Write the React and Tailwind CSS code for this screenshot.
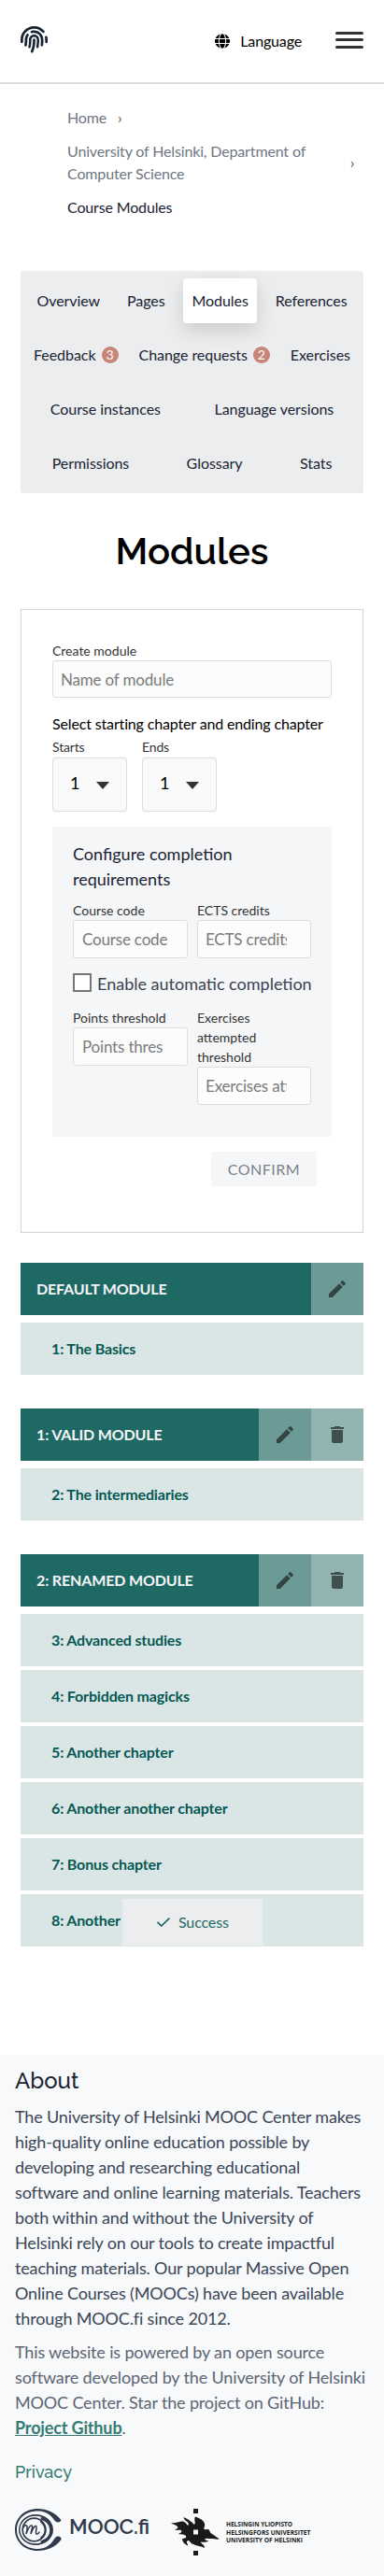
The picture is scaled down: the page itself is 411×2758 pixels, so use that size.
import React from "react";
import { FaFingerprint } from "react-icons/fa6";
import { MdEdit, MdDelete } from "react-icons/md";

function Globe() {
  return (
    <svg className="size-4" viewBox="0 0 496 512" preserveAspectRatio="none" fill="#000">
      <path d="M336.500 160C322 70.700 287.800 8 248 8s-74 62.700-88.500 152h177zM152 256c0 22.200 1.200 43.500 3.300 64h185.300c2.100-20.500 3.300-41.800 3.300-64s-1.200-43.500-3.300-64H155.300c-2.100 20.500-3.300 41.800-3.300 64zm324.700-96c-28.600-67.900-86.500-120.400-158-141.600 24.400 33.800 41.200 84.700 50 141.600h108zM177.200 18.400C105.800 39.600 47.800 92.100 19.300 160h108c8.700-56.900 25.500-107.800 49.900-141.600zM487.400 192H372.700c2.100 21 3.300 42.500 3.300 64s-1.200 43-3.300 64h114.600c5.500-20.500 8.600-41.800 8.600-64s-3.100-43.500-8.500-64zM120 256c0-21.500 1.200-43 3.300-64H8.600C3.200 212.500 0 233.800 0 256s3.200 43.500 8.600 64h114.600c-2-21-3.200-42.500-3.200-64zm39.500 96c14.500 89.300 48.700 152 88.500 152s74-62.700 88.500-152h-177zm159.300 141.600c71.400-21.200 129.400-73.700 158-141.600h-108c-8.800 56.900-25.600 107.800-50 141.600zM19.300 352c28.600 67.900 86.500 120.400 158 141.600-24.400-33.800-41.200-84.700-50-141.600h-108z" />
    </svg>
  );
}

function Header() {
  return (
    <header className="flex h-[90px] items-start border-b-2 border-[#dcdcdc] px-[22px]">
      <FaFingerprint className="mt-7 size-[29px] text-[#1a2333]" />
      <div className="mt-8 ml-auto flex h-6 items-center gap-[11px]">
        <Globe />
        <span className="text-base text-black">Language</span>
      </div>
      <div className="mt-[34px] ml-[36px] flex w-[30px] flex-col">
        <span className="h-[3px] rounded-sm bg-[#333]" />
        <span className="mt-1 h-[3px] rounded-sm bg-[#333]" />
        <span className="mt-[5px] h-[3px] rounded-sm bg-[#333]" />
      </div>
    </header>
  );
}

function Crumbs() {
  return (
    <nav className="flex h-[200px] flex-col gap-3 pt-6 pr-[32px] pl-[72px] text-base leading-6 text-[#707684]">
      <div className="flex items-center">
        <span>Home</span>
        <span className="ml-3 text-[#4c5361]">›</span>
      </div>
      <div className="flex items-center justify-between">
        <span className="w-[270px]">University of Helsinki, Department of Computer Science</span>
        <span className="text-[#4c5361]">›</span>
      </div>
      <div className="text-[#1a2333]">Course Modules</div>
    </nav>
  );
}

const tabRows = [
  [["Overview"], ["Pages"], ["Modules", null, true], ["References"]],
  [["Feedback", 3], ["Change requests", 2], ["Exercises"]],
  [["Course instances"], ["Language versions"]],
  [["Permissions"], ["Glossary"], ["Stats"]],
];

function Tabs() {
  return (
    <div className="mx-[22px] flex h-[238px] flex-col rounded-[3px] bg-[#ebedee] p-[3px] text-base tracking-[-0.05px] text-[#1a2333]">
      {tabRows.map((row, i) => (
        <div key={i} className="flex">
          {row.map(([name, count, active]) => (
            <div
              key={name}
              className={
                "m-[5px] flex h-12 flex-auto items-center justify-center rounded " +
                (active ? "bg-white shadow-[0_8px_20px_rgba(0,0,0,0.14)]" : "")
              }
            >
              {name}
              {count && (
                <span className="ml-1.5 flex size-[18px] items-center justify-center rounded-full bg-[#c68576] text-sm text-white">
                  {count}
                </span>
              )}
            </div>
          ))}
        </div>
      ))}
    </div>
  );
}

function Field({ label, placeholder, className, inputClass }) {
  return (
    <label className={"block text-sm leading-[21px] tracking-normal text-[#333] " + (className || "")}>
      {label}
      <input
        placeholder={placeholder}
        className={
          "block w-full rounded-[3px] border border-[#dedede] bg-[#fcfcfc] text-[17px] tracking-[-0.18px] placeholder:text-[#7b7b7b] " +
          inputClass
        }
      />
    </label>
  );
}

function Picker({ label }) {
  return (
    <div className="w-20 text-sm leading-[21px] text-[#333]">
      {label}
      <div className="mt-px flex h-[58px] items-center rounded-[3px] border border-[#dedede] bg-[#f9f9f9] pb-1 pl-[18px] text-lg text-black">
        <span className="w-[28px]">1</span>
        <svg className="mt-1.5 h-2 w-[14px]" viewBox="0 0 14 8" fill="#333">
          <path d="M0 0h14L7 8z" />
        </svg>
      </div>
    </div>
  );
}

function CreateForm() {
  return (
    <section className="mx-[22px] h-[668px] border border-[#d3d3d3] px-[33px] pt-[33px]">
      <Field label="Create module" placeholder="Name of module" inputClass="h-10 px-2" />
      <div className="mt-4 text-base leading-6 tracking-[-0.15px] text-black">
        Select starting chapter and ending chapter
      </div>
      <div className="mt-0.5 flex gap-4">
        <Picker label="Starts" />
        <Picker label="Ends" />
      </div>
      <div className="mt-4 h-[332px] bg-[#f5f6f8] px-[22px] pt-4">
        <div className="text-lg leading-[27px] tracking-normal text-[#1a2333]">Configure completion requirements</div>
        <div className="mt-[9px] flex gap-[10px]">
          <Field label="Course code" placeholder="Course code" className="w-[123px]" inputClass="h-[41px] pl-[9px] pr-4" />
          <Field label="ECTS credits" placeholder="ECTS credits" className="w-[122px]" inputClass="h-[41px] pl-[8px] pr-[25px]" />
        </div>
        <div className="mt-4 flex h-[26px] items-start gap-[6px]">
          <span className="size-5 shrink-0 border-2 border-[#767676] bg-white" />
          <span className="text-lg leading-[22px] tracking-normal whitespace-nowrap text-[#3b4252]">
            Enable automatic completion
          </span>
        </div>
        <div className="mt-[11px] flex items-start gap-[10px]">
          <Field label="Points threshold" placeholder="Points threshold" className="w-[123px]" inputClass="h-[41px] pl-[9px] pr-[25px]" />
          <Field label="Exercises attempted threshold" placeholder="Exercises attempted" className="w-[122px]" inputClass="h-[41px] pl-[8px] pr-[25px]" />
        </div>
      </div>
      <div className="mt-4 flex justify-end pr-4">
        <button className="h-[37px] w-[113px] bg-[#f5f6f8] text-base tracking-[0.5px] text-[#7b7f8a]">CONFIRM</button>
      </div>
    </section>
  );
}

const modules = [
  { name: "DEFAULT MODULE", fixed: true, chapters: ["1: The Basics"] },
  { name: "1: VALID MODULE", chapters: ["2: The intermediaries"] },
  {
    name: "2: RENAMED MODULE",
    chapters: [
      "3: Advanced studies",
      "4: Forbidden magicks",
      "5: Another chapter",
      "6: Another another chapter",
      "7: Bonus chapter",
      "8: Another",
    ],
  },
];

function Module({ name, fixed, chapters }) {
  return (
    <section className="mb-9">
      <div className="mb-2 flex h-14 bg-[#1f6964]">
        <div className="flex flex-1 items-center pl-[17px] text-base font-bold text-[#f5f6f7]">{name}</div>
        <div className="flex size-14 items-center justify-center bg-[#6b9a97] text-[#334443]">
          <MdEdit className="size-6" />
        </div>
        {!fixed && (
          <div className="flex size-14 items-center justify-center bg-[#91b4b2] text-[#3f4f4e]">
            <MdDelete className="size-6" />
          </div>
        )}
      </div>
      <div className="flex flex-col gap-1">
        {chapters.map((c) => (
          <div key={c} className="flex h-14 items-center bg-[#dae6e5] pl-[33px] text-base font-bold text-[#065853]">
            {c}
          </div>
        ))}
      </div>
    </section>
  );
}

function MoocLogo() {
  return (
    <svg className="h-[45px] w-[145px]" viewBox="0 0 145 45" fill="none" stroke="#313b4d" strokeLinecap="round">
      <path fill="#313b4d" stroke="none" d="M49.500 12C43 4 34 0 24.500 0C10 0 0 10 0 22.500S10 45 24.500 45C34 45 44 41 49.500 33C50 31 48 29.500 46 29.500C44 29.500 43 31 42 32.500C38 39 32 43 24.500 43C11 43 2 34 2 22.500S11 2.500 24.500 2.500C32 2.500 37 5 42 12C43.500 14.500 47.500 16 49.500 12z" />
      <path fill="#313b4d" stroke="none" fillRule="evenodd" d="M22 6a19 16.500 0 1 1 0 33a18 16.500 0 1 1 0-33zM22 7.800a16.500 14.700 0 1 0 0 29.400a16 14.700 0 1 0 0-29.400z" />
      <path strokeWidth="3" d="M29 10.500C42 15 42 31 29 35.500" />
      <circle cx="20.500" cy="22.500" r="12.300" strokeWidth="1.700" />
      <path strokeWidth="2" d="M28 14C34 19 34 27 28 31" />
      <path strokeWidth="1.500" d="M9 20C10 16.500 14 17 13 22L12 27C14 21 16 17.500 18 18C20 18.500 17 24 17 27C19 21 21 18 22.500 18.500C24.500 19.500 21 26 23 27C24 27.300 25.500 26 26 25" />
      <text
        x="58"
        y="27"
        fill="#313b4d"
        stroke="none"
        fontSize="22"
        textLength="86"
        lengthAdjust="spacingAndGlyphs"
        className="font-['Raleway','Lato',sans-serif] font-semibold tracking-normal"
      >
        MOOC.fi
      </text>
    </svg>
  );
}

function HelsinkiLogo() {
  return (
    <svg className="h-[50px] w-[151px] overflow-visible" viewBox="0 0 151 50" fill="#1a1a1a">
      <path d="M24 0h5v5h-5zM24 45h5v5h-5z" />
      <path
        fillRule="evenodd"
        d="M0 15C5 16 7 14 11 13.500C14 13 16 15 18 18C20 16 18 14 16 13C14 12 14 10 13.500 9C18 11 21 13 25 17C27 15 24 12 26 8.500C30 10 35 12 36 16C37 19 34 21 36 22C38 23 40 21 41 23C42 25 42 26 44 27L52 32.500C48 33 46 32 43 32C40 32 38 31 36 32.500C37 34 39 34.500 41 34C38 36 35 36 32 35.500C32 38 36 38 36 42C32 40 28 40 24 38C20 37 21 34 18 34C15 36 19 38 18 39.500C14 38 12 35 12 32C15 32 17 31 16 29C14 27 12 28 8 27C10 26 12 25 11 23C8 22 6 24 4 22C6 22 8 21 7 19C5 17 2 17 0 15zM24 22.500v5h5v-5z"
      />
      <g className="font-['Open_Sans',sans-serif] font-bold tracking-normal" fontSize="7.600">
        <text x="59" y="19" textLength="71" lengthAdjust="spacingAndGlyphs">HELSINGIN YLIOPISTO</text>
        <text x="59" y="27.500" textLength="90.500" lengthAdjust="spacingAndGlyphs">HELSINGFORS UNIVERSITET</text>
        <text x="59" y="36" textLength="82" lengthAdjust="spacingAndGlyphs">UNIVERSITY OF HELSINKI</text>
      </g>
    </svg>
  );
}

function Footer() {
  return (
    <footer className="h-[558px] bg-[#f7f9fa] px-4 pt-[10px] text-lg leading-[27px]">
      <h2 className="font-['Raleway','Lato',sans-serif] text-2xl leading-9 font-medium tracking-normal text-[#1a2333]">
        About
      </h2>
      <p className="mt-[7px] whitespace-nowrap text-[#3b4657]">
        The University of Helsinki MOOC Center makes
        <br />
        high-quality online education possible by
        <br />
        developing and researching educational
        <br />
        software and online learning materials. Teachers
        <br />
        both within and without the University of
        <br />
        Helsinki rely on our tools to create impactful
        <br />
        teaching materials. Our popular Massive Open
        <br />
        Online Courses (MOOCs) have been available
        <br />
        through MOOC.fi since 2012.
      </p>
      <p className="mt-[9px] text-[#5d6573]">
        This website is powered by an open source software developed by the University of Helsinki MOOC Center. Star
        the project on GitHub:{" "}
        <a className="inline-block font-bold text-[#357b73] underline">Project Github</a>.
      </p>
      <a className="mt-5 block font-['Raleway','Lato',sans-serif] leading-[27px] font-medium tracking-normal text-[#357b73]">
        Privacy
      </a>
      <div className="mt-[26px] flex items-start gap-[22px]">
        <MoocLogo />
        <HelsinkiLogo />
      </div>
    </footer>
  );
}

export default function App() {
  return (
    <div className="relative h-[2758px] w-[411px] overflow-hidden bg-white font-['Lato',sans-serif] tracking-[-0.15px]">
      <Header />
      <Crumbs />
      <Tabs />
      <h1 className="my-8 text-center font-['Raleway','Lato',sans-serif] text-[40px] leading-[60px] font-semibold tracking-normal text-black">
        Modules
      </h1>
      <CreateForm />
      <main className="mx-[22px] mt-8 h-[848px]">
        {modules.map((m) => (
          <Module key={m.name} {...m} />
        ))}
      </main>
      <Footer />
      <div className="absolute top-[2033px] left-[131px] flex h-[50px] w-[150px] items-center bg-[#ebedee] pl-[37px] text-base text-[#1f6964]">
        <svg className="h-[10px] w-[14px]" viewBox="0 0 14 10" fill="none" stroke="#1f6964" strokeWidth="1.700">
          <path d="M.6 4.800L4.700 9L13.400.7" />
        </svg>
        <span className="ml-[9px]">Success</span>
      </div>
    </div>
  );
}
